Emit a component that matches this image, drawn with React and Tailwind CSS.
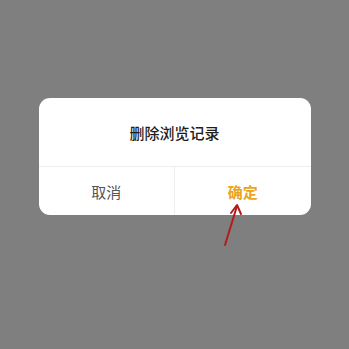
export default function App() {
  return (
    <div
      className="relative w-[349px] h-[349px] bg-[#7f7f7f] overflow-hidden pt-[98px]"
      style={{ fontFamily: '"Noto Sans CJK SC", "Noto Sans", sans-serif' }}
    >
      {/* Dialog */}
      <div className="mx-auto w-[272px] rounded-[11px] bg-white overflow-hidden">
        <div className="h-[69px] flex items-center justify-center border-b border-[#eeeeee]">
          <span className="text-[15px] leading-none font-medium text-[#1c1c1c]">删除浏览记录</span>
        </div>
        <div className="flex h-[48px]">
          <button className="flex-1 flex items-center justify-center border-r border-[#eeeeee] text-[15px] leading-none text-[#555555]">
            取消
          </button>
          <button className="flex-1 flex items-center justify-center text-[15px] leading-none font-bold text-[#eba51a]">
            确定
          </button>
        </div>
      </div>

      {/* Annotation arrow */}
      <svg className="absolute left-0 top-0" width="349" height="349" viewBox="0 0 349 349">
        <g stroke="#b31b1b" strokeWidth="2" strokeLinecap="round" fill="none">
          <line x1="225" y1="245" x2="237" y2="206" />
          <polyline points="231,213 237,205 241,214" strokeLinejoin="round" />
        </g>
      </svg>
    </div>
  )
}
